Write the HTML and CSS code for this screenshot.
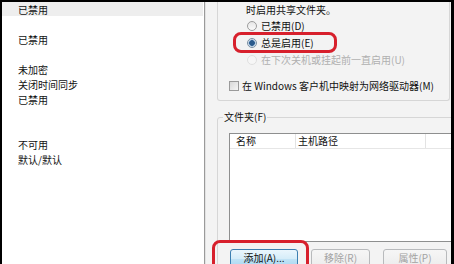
FILE: index.html
```html
<!DOCTYPE html>
<html lang="zh-CN">
<head>
    <meta charset="UTF-8">
    <title>共享文件夹</title>
    <link rel="stylesheet" href="styles.css">
</head>
<body>
<div class="frame">
    <ul class="summary">
        <li class="sel">已禁用</li>
        <li></li>
        <li>已禁用</li>
        <li></li>
        <li>未加密</li>
        <li>关闭时间同步</li>
        <li>已禁用</li>
        <li></li>
        <li></li>
        <li>不可用</li>
        <li>默认/默认</li>
    </ul>
    <div class="pane">
        <div class="group share">
            <p class="note">时启用共享文件夹。</p>
            <label class="opt"><span class="radio"></span>已禁用(D)</label>
            <label class="opt"><span class="radio on"></span>总是启用(E)<span class="ring ring-opt"></span></label>
            <label class="opt off"><span class="radio dim"></span>在下次关机或挂起前一直启用(U)</label>
            <label class="check"><span class="box"></span>在 Windows 客户机中映射为网络驱动器(M)</label>
        </div>
        <fieldset class="folders">
            <legend>文件夹(F)</legend>
            <div class="list">
                <div class="head">
                    <span class="col name">名称</span>
                    <span class="col path">主机路径</span>
                    <span class="col rest"></span>
                </div>
            </div>
            <div class="btns">
                <button class="btn main">添加(A)...<span class="ring ring-btn"></span></button>
                <button class="btn w2" disabled>移除(R)</button>
                <button class="btn w3" disabled>属性(P)</button>
            </div>
        </fieldset>
    </div>
</div>
</body>
</html>
```

FILE: styles.css
```css
html, body {
    margin: 0;
    padding: 0;
}
body {
    background: #000;
    padding: 2px 3px 0 2px;
    font: 10px/15px "Noto Sans CJK SC", "Liberation Sans", sans-serif;
    color: #111;
}
.frame {
    display: flex;
    width: 449px;
    height: 262px;
    overflow: hidden;
    background: #f3f3f3;
}
ul {
    margin: 0;
    padding: 0;
    list-style: none;
}
.summary {
    flex: none;
    width: 202px;
    background: #fff;
    border-right: 1px solid #9a9a9a;
}
.summary li {
    height: 15px;
    padding-left: 16px;
    margin-right: 1px;
}
.summary .sel {
    height: 14px;
    margin-bottom: 1px;
    background: #eeeeee;
}
.pane {
    flex: 1;
    border-left: 1px solid #e2e2e2;
    padding-left: 11px;
    min-width: 0;
}
.group {
    margin-right: 1px;
    border: 1px solid #d6d6d6;
    border-top: none;
    border-radius: 0 0 3px 3px;
    padding: 0 0 6px 28px;
}
.note {
    margin: 0;
    height: 15px;
}
.opt {
    position: relative;
    display: flex;
    align-items: center;
    height: 17px;
    padding-left: 1px;
}
.opt.off {
    color: #b0b0b0;
}
.radio {
    flex: none;
    width: 8px;
    height: 8px;
    margin-right: 4px;
    border: 1px solid #9c9c9c;
    border-radius: 50%;
    background: linear-gradient(#e6e6e6, #fafafa);
}
.radio.on {
    background: radial-gradient(circle, #2a5a8c 0 2.5px, #8fb2d4 3px, #eef2f6 4px);
    border-color: #7a8fa3;
}
.radio.dim {
    border-color: #e0e0e0;
    background: #f6f6f6;
}
.check {
    display: flex;
    align-items: center;
    height: 17px;
    margin: 9px 0 0 -17px;
}
.box {
    flex: none;
    width: 8px;
    height: 8px;
    margin-right: 3px;
    border: 1px solid #9a9a9a;
    background: linear-gradient(135deg, #d8d8d8, #f5f5f5);
}
.ring {
    position: absolute;
    border: 3px solid #d7202c;
    border-radius: 8px;
    pointer-events: none;
}
.ring-opt {
    left: -13px;
    top: -2px;
    width: 98px;
    height: 15px;
}
.ring-btn {
    left: -19px;
    top: -10px;
    width: 91px;
    height: 40px;
}
.folders {
    margin: 9px -30px 0 0;
    padding: 0 0 0 11px;
    border: 1px solid #d6d6d6;
    border-radius: 3px;
    min-width: 0;
}
.folders legend {
    margin-left: -6px;
    padding: 0 1px;
    line-height: 14px;
}
.list {
    margin-top: 9px;
    height: 107px;
    background: #fff;
    border: 1px solid #8e8f8f;
    border-right: none;
}
.head {
    display: flex;
    height: 14px;
    line-height: 13px;
    border-bottom: 1px solid #e6e6e6;
}
.col {
    border-right: 1px solid #e3e3e3;
}
.name {
    width: 59px;
    padding-left: 6px;
}
.path {
    width: 127px;
    padding-left: 2px;
}
.rest {
    flex: 1;
    border-right: none;
}
.btns {
    display: flex;
    gap: 13px;
    margin: 7px 0 0 1px;
}
.btn {
    position: relative;
    height: 19px;
    padding: 0 0 2px;
    font: inherit;
    line-height: 15px;
    color: #a3a3a3;
    border: 1px solid #b8babc;
    border-radius: 3px;
    background: linear-gradient(#f6f6f6, #ececec);
}
.btn.main {
    width: 68px;
    color: #111;
    border-color: #3c7fb1;
    background: linear-gradient(#eaf6fd, #d6edf9 50%, #c2e3f5 51%, #a9d8f3);
}
.w2 {
    width: 59px;
}
.w3 {
    width: 64px;
}
```
